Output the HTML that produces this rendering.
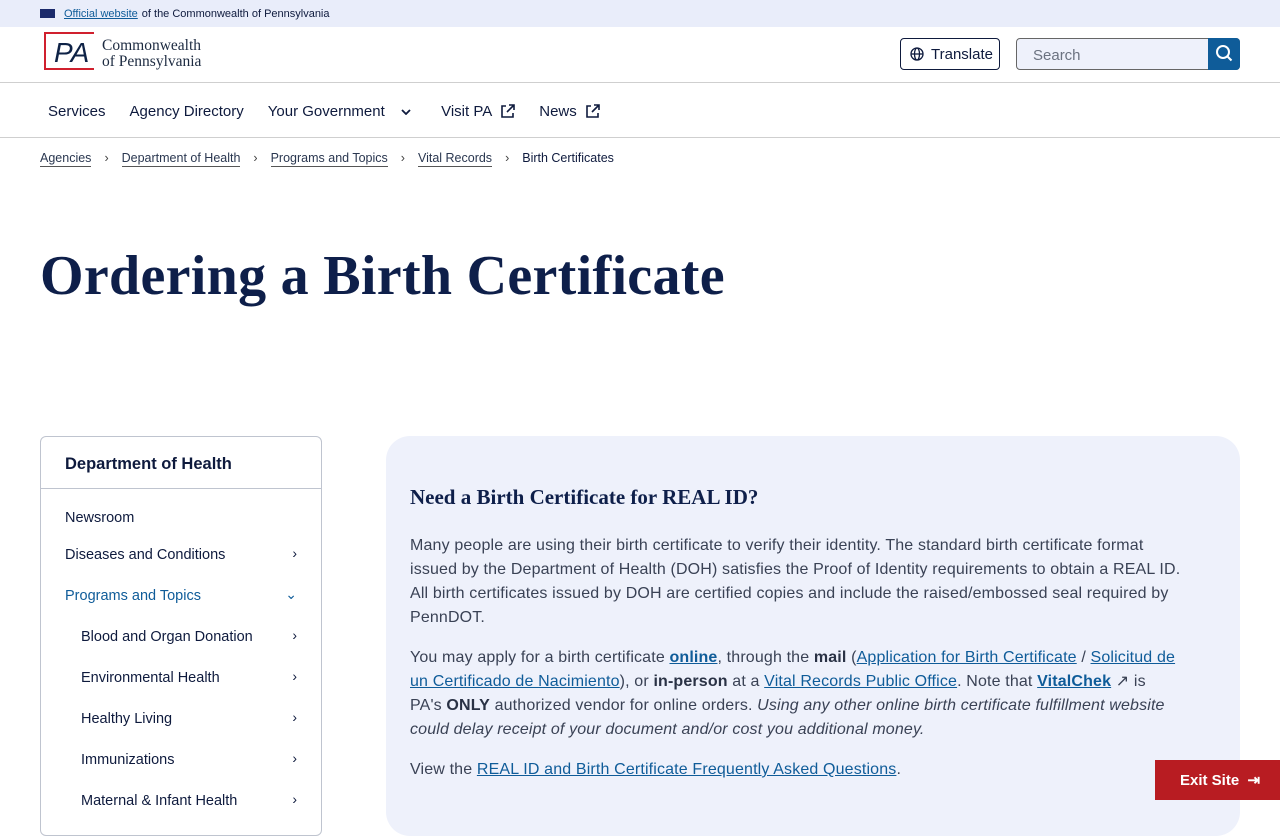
<!DOCTYPE html>
<html><head><meta charset="utf-8"><style>
*{box-sizing:border-box;margin:0;padding:0}
body{width:1280px;height:800px;overflow:hidden;font-family:"Liberation Sans",sans-serif;color:#0e1a3d;background:#fff;position:relative}
.top{height:27px;background:#e9edfa;font-size:11px;display:flex;align-items:center;padding-left:40px}
.top .flag{width:15px;height:9px;background:#1b2a6b;margin-right:9px}
.top a{color:#0f5c99;text-decoration:underline;margin-right:4px}
.hdr{height:56px;border-bottom:1px solid #cfcfcf;position:relative}
.logo{position:absolute;left:44px;top:5px;display:flex;align-items:center}
.logo .pa{width:50px;height:38px;border:2.5px solid #d0202e;border-right:none;position:relative;font-family:"Liberation Sans",sans-serif;font-style:italic;font-size:28px;color:#0e2246;line-height:38px;padding-left:8px}
.logo .txt{font-family:"Liberation Serif",serif;font-size:15.5px;line-height:16px;color:#1c2a40;margin-left:8px;padding-top:6px}
.tr{position:absolute;left:900px;top:11px;width:100px;height:32px;border:1px solid #0e1a3d;border-radius:4px;font-size:15px;display:flex;align-items:center;padding-left:30px}
.tr svg{position:absolute;left:9px;top:8px}
.srch{position:absolute;left:1016px;top:11px;width:224px;height:32px;border:1px solid #666;border-radius:4px;background:#eef1fb;font-size:15px;color:#6b7280;padding:8px 0 0 16px}
.srch .b{position:absolute;right:-1px;top:-1px;width:32px;height:32px;background:#0f5c99;border-radius:0 4px 4px 0}
.nav{height:55px;border-bottom:1px solid #cfcfcf;display:flex;align-items:center;padding-left:48px;font-size:15px;gap:24px;padding-top:3px}
.nav span{display:inline-flex;align-items:center;gap:8px}
.bc{font-size:12.5px;padding:13px 0 0 40px;display:flex;gap:11px;color:#0e1a3d}
.bc a{color:#2a3750;text-decoration:none;border-bottom:1px solid #555;padding-bottom:1px}
.bc i{font-style:normal;color:#444;margin:0 2px}
h1{position:absolute;left:40px;top:244px;font-family:"Liberation Serif",serif;font-weight:bold;font-size:56px;color:#0e1f4a;letter-spacing:0.3px}
.side{position:absolute;left:40px;top:436px;width:282px;height:400px;border:1px solid #bfc4cf;border-radius:6px}
.side .h{height:52px;border-bottom:1px solid #bfc4cf;font-weight:bold;font-size:16.5px;padding:18px 0 0 24px}
.side .it{position:absolute;font-size:14.5px;color:#0e1a3d}
.side .ch{position:absolute;right:24px;font-size:14px}
.card{position:absolute;left:386px;top:436px;width:854px;height:400px;background:#eef1fb;border-radius:24px;padding:49px 24px}
.card h2{font-family:"Liberation Serif",serif;font-size:21px;font-weight:bold;color:#0e1f4a;margin-bottom:24px}
.card p{font-size:16px;letter-spacing:0.15px;line-height:24px;color:#3a4255;margin-bottom:16px;width:820px}
.card a{color:#0f5c99;text-decoration:underline}
.card b{color:#2a3245}
.exit{position:absolute;left:1155px;top:760px;width:125px;height:40px;background:#b81c22;color:#fff;font-weight:bold;font-size:15px;padding:11px 0 0 25px}
</style></head><body>
<div class="top"><div class="flag"></div><a>Official website</a> of the Commonwealth of Pennsylvania</div>
<div class="hdr">
<div class="logo"><div class="pa">PA</div><div class="txt">Commonwealth<br>of Pennsylvania</div></div>
<div class="tr"><svg width="14" height="14" viewBox="0 0 14 14" fill="none" stroke="#0e1a3d" stroke-width="1.3"><circle cx="7" cy="7" r="6"/><ellipse cx="7" cy="7" rx="2.5" ry="6"/><path d="M1 7h12"/></svg>Translate</div>
<div class="srch">Search<div class="b"><svg width="32" height="32" viewBox="0 0 32 32" fill="none" stroke="#fff" stroke-width="2"><circle cx="15" cy="14" r="6"/><path d="M19.5 18.5l4 4"/></svg></div></div>
</div>
<div class="nav"><span>Services</span><span>Agency Directory</span><span>Your Government &nbsp;<svg width="10" height="6" viewBox="0 0 10 6" fill="none" stroke="#0e1a3d" stroke-width="1.8"><path d="M1 1l4 4 4-4"/></svg></span><span style="margin-left:6px">Visit PA <svg width="15" height="15" viewBox="0 0 15 15" fill="none" stroke="#0e1a3d" stroke-width="1.6"><path d="M6 2H2v11h11V9M9 1h5v5M14 1L7 8"/></svg></span><span>News <svg width="15" height="15" viewBox="0 0 15 15" fill="none" stroke="#0e1a3d" stroke-width="1.6"><path d="M6 2H2v11h11V9M9 1h5v5M14 1L7 8"/></svg></span></div>
<div class="bc"><a>Agencies</a><i>›</i><a>Department of Health</a><i>›</i><a>Programs and Topics</a><i>›</i><a>Vital Records</a><i>›</i><span>Birth Certificates</span></div>
<h1>Ordering a Birth Certificate</h1>
<div class="side"><div class="h">Department of Health</div>
<div class="it" style="left:24px;top:73px">Newsroom</div>
<div class="it" style="left:24px;top:110px">Diseases and Conditions</div><div class="ch" style="top:108px">›</div>
<div class="it" style="left:24px;top:151px;color:#0f5c99">Programs and Topics</div><div class="ch" style="top:149px;color:#0f5c99">⌄</div>
<div class="it" style="left:40px;top:192px">Blood and Organ Donation</div><div class="ch" style="top:190px">›</div>
<div class="it" style="left:40px;top:233px">Environmental Health</div><div class="ch" style="top:231px">›</div>
<div class="it" style="left:40px;top:274px">Healthy Living</div><div class="ch" style="top:272px">›</div>
<div class="it" style="left:40px;top:315px">Immunizations</div><div class="ch" style="top:313px">›</div>
<div class="it" style="left:40px;top:356px">Maternal &amp; Infant Health</div><div class="ch" style="top:354px">›</div>
</div>
<div class="card"><h2>Need a Birth Certificate for REAL ID?</h2>
<p>Many people are using their birth certificate to verify their identity. The standard birth certificate format<br>issued by the Department of Health (DOH) satisfies the Proof of Identity requirements to obtain a REAL ID.<br>All birth certificates issued by DOH are certified copies and include the raised/embossed seal required by<br>PennDOT.</p>
<p>You may apply for a birth certificate <a><b style="color:#0f5c99">online</b></a>, through the <b>mail</b> (<a>Application for Birth Certificate</a> / <a>Solicitud de</a><br><a>un Certificado de Nacimiento</a>), or <b>in-person</b> at a <a>Vital Records Public Office</a>. Note that <a><b style="color:#0f5c99">VitalChek</b></a> ↗ is<br>PA's <b>ONLY</b> authorized vendor for online orders. <i>Using any other online birth certificate fulfillment website</i><br><i>could delay receipt of your document and/or cost you additional money.</i></p>
<p>View the <a>REAL ID and Birth Certificate Frequently Asked Questions</a>.</p>
</div>
<div class="exit">Exit Site &nbsp;⇥</div>
</body></html>
